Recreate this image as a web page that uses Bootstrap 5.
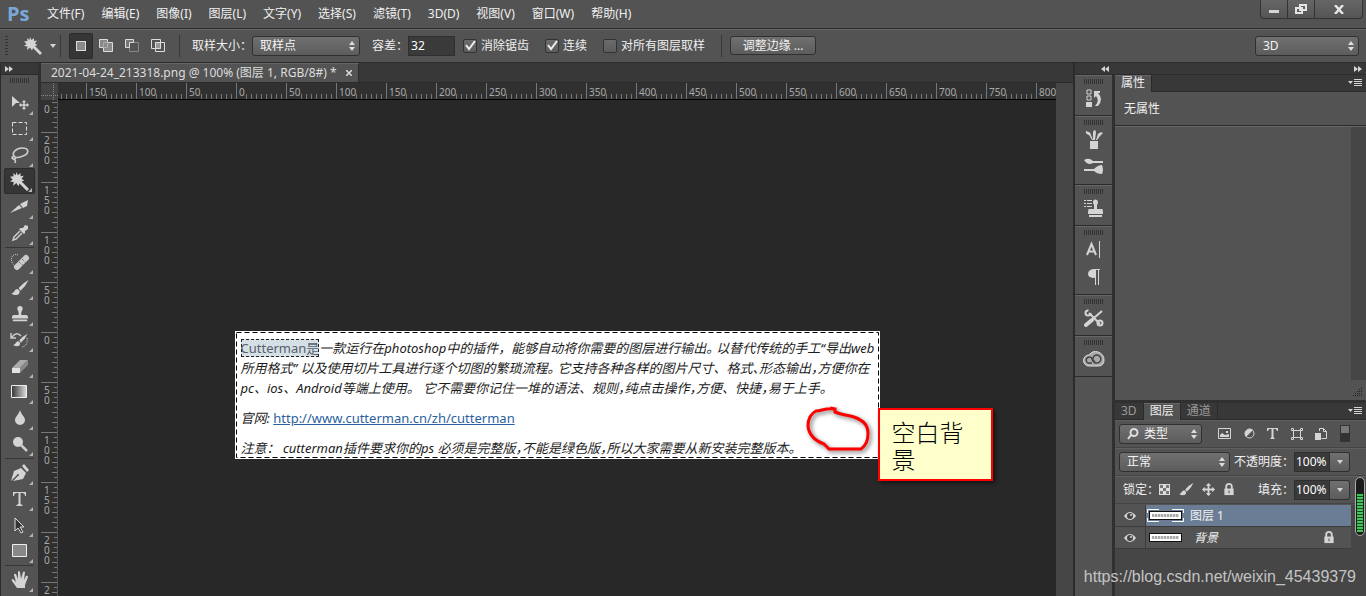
<!DOCTYPE html>
<html lang="zh-CN">
<head>
<meta charset="utf-8">
<meta name="viewport" content="width=device-width, initial-scale=1">
<title>Photoshop</title>
<link href="https://cdn.jsdelivr.net/npm/bootstrap@5.3.0/dist/css/bootstrap.min.css" rel="stylesheet">
<style>
:root{--face:#535353;--dark:#282828;--line:#2b2b2b;--lite:#666}
body{font-family:"Noto Sans","Noto Sans CJK SC",sans-serif;font-size:12px;line-height:16px;color:#f0f0f0;background:var(--face)}
button{font:inherit;color:inherit;background:none;border:0;padding:0}
svg{display:block;flex:none}
.ico{fill:#d4d4d4;stroke:none}
.menubar{height:28px;padding-left:7px}
.logo{font:bold 20px/24px "Open Sans",sans-serif;color:#7ba7d7;width:40px}
.menus{gap:17px}
.menus a{color:#f0f0f0;text-decoration:none}
.winbtns{border:1px solid #333;border-top:0;border-radius:0 0 4px 4px;margin-right:3px;height:19px;background:linear-gradient(#666,#555);overflow:hidden}
.winbtns button{width:27px;height:18px;border-right:1px solid #333;display:flex;align-items:center;justify-content:center}
.winbtns button:last-child{width:47px;border:0}
.optbar{height:34px;border-top:1px solid var(--line);box-shadow:inset 0 1px var(--lite);padding:0 7px 0 5px}
.grip-v{width:3px;height:20px;background:repeating-linear-gradient(#333 0 1px,transparent 1px 3px)}
.grip-h{width:20px;height:5px;flex:none;background:repeating-linear-gradient(90deg,#333 0 1px,transparent 1px 2px)}
.sep{width:1px;height:22px;background:#383838}
.modebtn{width:26px;height:26px;display:flex;align-items:center;justify-content:center}
.modebtn.on{background:#363636;border:1px solid #2b2b2b;border-radius:2px;width:24px}
.picker{appearance:none;height:20px;font:inherit;color:#f4f4f4;border:1px solid #303030;border-radius:3px;padding:0 7px;
 background:url("data:image/svg+xml,%3Csvg xmlns='http://www.w3.org/2000/svg' width='6' height='10'%3E%3Cpath fill='%23ddd' d='M3 0L6 4H0zM3 10L0 6H6z'/%3E%3C/svg%3E") no-repeat right 4px center,linear-gradient(#707070,#5c5c5c)}
.numbox{background:#3a3a3a;border:1px solid #2f2f2f;color:#fff;font:inherit;height:20px;padding:0 2px;border-radius:0}
.pct{padding:0 1px;width:36px}
.tick{appearance:none;width:14px;height:14px;margin:0;border:1px solid #333;border-radius:2px;background:linear-gradient(#6c6c6c,#5c5c5c)}
.tick:checked{background:url("data:image/svg+xml,%3Csvg xmlns='http://www.w3.org/2000/svg' width='12' height='12'%3E%3Cpath fill='none' stroke='%23eee' stroke-width='2' d='M2 5L5 9L11 1'/%3E%3C/svg%3E"),linear-gradient(#6c6c6c,#5c5c5c)}
.btn-edge{height:19px;width:86px;border:1px solid #303030;border-radius:3px;background:linear-gradient(#707070,#5c5c5c);line-height:16px}
.frame{border-top:1px solid var(--line)}
.strip{height:12px;background:#383838;border-bottom:1px solid var(--line)}
.tools{width:41px;border-left:1px solid var(--line);border-right:3px solid #303030}
.tools .grip-h{margin:3px 0 7px}
.toolbtn{height:26px;width:31px;position:relative;display:flex;align-items:center;justify-content:center;flex:none}
.toolbtn::after{content:"";position:absolute;right:2px;bottom:1px;border:2px solid transparent;border-right-color:#b5b5b5;border-bottom-color:#b5b5b5}
.toolbtn.on{background:#363636;border:1px solid #2b2b2b;border-radius:2px}
.rule{height:1px;width:29px;background:#363636;margin:1px 0;flex:none}
.tabs{height:20px;background:#383838;border-bottom:1px solid var(--line)}
.doctab{background:var(--face);border-right:1px solid var(--line);border-top:1px solid var(--lite);padding:0 6px 0 10px;gap:9px;height:19px;line-height:18px;color:#ddd}
.corner{width:17px;height:17px;background:#444}
.rul{background-color:#303030;color:#a9a9a9;font-size:10px;line-height:10px;overflow:hidden}
.rul-h{height:17px;border-bottom:1px solid #000;padding-left:28px;
 background-image:repeating-linear-gradient(90deg,#777 0 1px,transparent 1px 50px),repeating-linear-gradient(90deg,#777 0 1px,transparent 1px 5px);
 background-repeat:no-repeat;background-size:2000px 16px,2000px 5px;background-position:-22px 0,-2px 11px}
.rul-h span{width:50px;flex:none;padding:4px 0 0 3px}
.rul-h b{font-weight:400;background:#303030;display:inline-block;height:12px}
.rul-v{width:17px;border-right:1px solid #555;
 background-image:repeating-linear-gradient(#777 0 1px,transparent 1px 50px),repeating-linear-gradient(#777 0 1px,transparent 1px 10px),repeating-linear-gradient(#777 0 1px,transparent 1px 5px);
 background-repeat:no-repeat;background-size:16px 2000px,5px 2000px,3px 2000px;background-position:0 -18px,11px -8px,13px -3px}
.rul-v span{height:50px;width:14px;padding:3px 4px 0 3px;word-break:break-all;flex:none}
.rul-v span:first-child{height:32px;padding-top:0;padding-bottom:18px;display:flex;align-items:flex-end}
.rul-v span:last-child{height:12px}
.canvas{background:var(--dark);overflow:hidden;padding-top:231px}
.vscroll{width:17px;background:#454545}
.art{width:645px;height:128px;background:#fff;padding:7px 6px;color:#1c1c1c;font-size:13px;line-height:20px;white-space:nowrap}
.art p{margin:0 0 10px;font-style:italic}
.art i{font-feature-settings:"halt"}
.ants{inset:0 1px 1px;pointer-events:none}
.picked{font-style:normal;background:#d5dfe6;color:#56616a;outline:1px dashed #222;outline-offset:-1px}
.art a{color:#2b5f9e;font-style:normal}
.lasso{left:569px;top:73px;filter:drop-shadow(2px 2px 2px #0008)}
.note{left:643px;top:77px;width:115px;height:73px;background:#ffc;border:2px solid #f00;color:#000;padding:8px 12px;font:24px/27px "Noto Sans CJK SC",sans-serif;font-weight:300;white-space:normal;box-shadow:2px 2px 4px #0008}
.side{width:293px;border-left:2px solid var(--line)}
.side>.strip{padding:0 4px 0 26px}
.dock{width:40px;border-right:3px solid #303030}
.grp{border-bottom:1px solid var(--line);box-shadow:inset 0 1px var(--lite);padding-top:4px;display:flex;flex-direction:column;align-items:center}
.grp button{height:28px;display:flex;align-items:center}
.g1{height:41px}.g2{height:69px}
.ptabs{height:17px;background:#383838;border-bottom:1px solid var(--line);color:#999;padding-right:4px}
.ptabs button{padding:0 6px;height:17px;border-right:1px solid var(--line)}
.ptabs .on{background:var(--face);color:#eee;box-shadow:inset 0 1px var(--lite)}
.props{height:328px;border-bottom:3px solid #303030}
.propmsg{height:34px;border-bottom:1px solid var(--line);padding-left:9px}
.propbody{border-top:1px solid var(--lite)}
.track{width:15px;height:253px;background:#454545}
.prow{height:28px;padding-left:4px;border-bottom:1px solid #444;box-shadow:inset 0 1px #606060}
.drop{width:20px;height:20px;border:1px solid #303030;border-left:0;border-radius:0 3px 3px 0;background:linear-gradient(#707070,#5c5c5c);display:flex;align-items:center;justify-content:center}
.layers{background:#464646}
.layer{height:22px;background:var(--face);border-bottom:1px solid #3c3c3c;margin-right:15px}
.eye{width:31px;height:21px;border-right:1px solid #3c3c3c;display:flex;align-items:center;justify-content:center}
.fill{padding-left:3px}
.layer.on .fill{background:#6b7d95}
.thumb{width:33px;height:9px;border:1px solid #111;background:#fff;display:flex;align-items:center;position:relative}
.thumb::before{content:"";flex:1;height:3px;margin:0 2px;background:repeating-linear-gradient(90deg,#aaa 0 2px,#ddd 2px 3px)}
.thumb svg{position:absolute;left:-3px;top:-3px}
.meter{right:1px;top:477px;width:10px;height:59px;border:1px solid #aaa;border-radius:5px;background:#1c1c1c;padding:16px 1px 3px}
.meter i{display:block;height:100%;background:repeating-linear-gradient(#3fc85a 0 2px,#174d22 2px 3px)}
.wm{right:10px;bottom:8px;font:16px/22px "Liberation Sans",sans-serif;color:#c4c4c4;pointer-events:none}
</style>
</head>
<body class="vh-100 overflow-hidden d-flex flex-column position-relative">
<svg width="0" height="0" class="position-absolute" aria-hidden="true">
<defs>
<linearGradient id="gr"><stop stop-color="#333"/><stop offset="1" stop-color="#ddd"/></linearGradient>
<symbol id="wand" viewBox="0 0 18 18"><path d="M6 0l1.500 3L10 1l0 3 3-.5-2 3 2.500 1.500-2.500 1 7 7-2 2-7-7-1 2.500-2-3L3 13l.5-3.500L0 9l2.500-2L0 4.500 3.500 4 3 1l2.500 2z"/></symbol>
<symbol id="brush" viewBox="0 0 20 20"><path d="M20 1Q14 4 9 10l2 3q6-5 9-12zM8 11c-4 0-3 4-7 5 4 3 10 2 9-3z"/></symbol>
<symbol id="move" viewBox="0 0 14 14"><path d="M7 0l3 3H8v3h3V4l3 3-3 3V8H8v3h2l-3 3-3-3h2V8H3v2L0 7l3-3v2h3V3H4z"/></symbol>
<symbol id="stamp" viewBox="0 0 20 20"><path d="M7 4a3 3 0 0 1 6 0c0 2-2 3-1.500 7H17q2 0 2 4H1q0-4 2-4h5.500C9 7 7 6 7 4zM2 16h16v2H2z"/></symbol>
<symbol id="lock" viewBox="0 0 12 14"><path d="M1 6h10v7H1z"/><path d="M3 7V4a3 3 0 0 1 6 0v3" fill="none" stroke="#d4d4d4" stroke-width="2"/><path d="M5.500 8h1v3h-1z" fill="#444"/></symbol>
<symbol id="eyeb" viewBox="0 0 12 8"><path d="M0 4q6-8 12 0q-6 8-12 0z"/><circle cx="6" cy="4" r="3" fill="#444"/><circle cx="7" cy="3" r="1"/></symbol>
<symbol id="pmenu" viewBox="0 0 14 8"><path d="M0 2h5L2.500 5zM6 0h8v1H6zM6 2h8v1H6zM6 4h8v1H6zM6 6h8v1H6z"/></symbol>
<symbol id="dn" viewBox="0 0 6 4"><path d="M0 0h6L3 4z"/></symbol>
<symbol id="ff" viewBox="0 0 8 6"><path d="M0 0l4 3-4 3zM4 0l4 3-4 3z"/></symbol>
<symbol id="rw" viewBox="0 0 8 6"><path d="M4 0v6L0 3zM8 0v6L4 3z"/></symbol>
</defs>
</svg>

<header class="menubar d-flex align-items-center flex-shrink-0">
<div class="logo">Ps</div>
<nav class="menus d-flex">
<a href="#">文件(F)</a><a href="#">编辑(E)</a><a href="#">图像(I)</a><a href="#">图层(L)</a><a href="#">文字(Y)</a><a href="#">选择(S)</a><a href="#">滤镜(T)</a><a href="#">3D(D)</a><a href="#">视图(V)</a><a href="#">窗口(W)</a><a href="#">帮助(H)</a>
</nav>
<div class="winbtns d-flex ms-auto align-self-start">
<button aria-label="最小化"><svg class="ico" width="10" height="8"><path d="M0 5h10v3H0z"/></svg></button>
<button aria-label="还原"><svg width="12" height="10" fill="none" stroke="#e4e4e4" stroke-width="2"><path d="M5 1h6v5H5zM1 4h6v5H1z"/></svg></button>
<button aria-label="关闭"><svg width="10" height="9" stroke="#e4e4e4" stroke-width="2.500"><path d="M1 0l8 9M9 0L1 9"/></svg></button>
</div>
</header>

<section class="optbar d-flex align-items-center flex-shrink-0">
<div class="grip-v"></div>
<svg class="ico ms-3" width="18" height="18"><use href="#wand"/></svg>
<svg class="ico ms-2" width="6" height="4"><use href="#dn"/></svg>
<div class="sep ms-1 me-2"></div>
<button class="modebtn on" aria-label="新选区"><svg width="10" height="10"><path d="M0 0h10v10H0z" fill="#8a8a8a" stroke="#ddd" stroke-width="2"/></svg></button>
<button class="modebtn" aria-label="添加"><svg width="14" height="14" fill="#8a8a8a" stroke="#ddd"><path d="M.5.5h8v3h5v9h-9v-4h-4z"/><path d="M4.500 3.500h4v5h-4z" stroke="#aaa"/></svg></button>
<button class="modebtn" aria-label="减去"><svg width="14" height="14" fill="none"><path d="M4.500 3.500h9v9h-9z" stroke="#888"/><path d="M.5.5h8v3h-4v5h-4z" stroke="#ddd" fill="#777"/></svg></button>
<button class="modebtn" aria-label="交叉"><svg width="14" height="14" fill="none" stroke="#ddd"><path d="M.5.5h9v9h-9zM4.500 3.500h9v9h-9z"/><path d="M4.500 3.500h5v6h-5z" fill="#999"/></svg></button>
<div class="sep ms-2"></div>
<label class="ms-2 ps-1" for="ss">取样大小：</label>
<select class="picker" id="ss" style="width:108px"><option>取样点</option></select>
<label class="ms-2 ps-1" for="tol">容差：</label>
<input class="numbox" id="tol" value="32" style="width:47px">
<input class="tick ms-2" type="checkbox" id="c1" checked><label class="ms-1" for="c1">消除锯齿</label>
<input class="tick ms-3" type="checkbox" id="c2" checked><label class="ms-1" for="c2">连续</label>
<input class="tick ms-3" type="checkbox" id="c3"><label class="ms-1" for="c3">对所有图层取样</label>
<div class="sep ms-3"></div>
<button class="btn-edge ms-2">调整边缘 ...</button>
<select class="picker ms-auto" aria-label="工作区" style="width:104px"><option>3D</option></select>
</section>

<div class="frame d-flex flex-grow-1" style="min-height:0">
<aside class="tools d-flex flex-column align-items-center flex-shrink-0">
<div class="strip w-100 d-flex align-items-center ps-1 flex-shrink-0"><svg class="ico" width="8" height="6"><use href="#ff"/></svg></div>
<div class="grip-h"></div>
<button class="toolbtn" aria-label="移动"><svg class="ico" width="18" height="16"><path d="M1 1l8 7H5l-4 4z"/><use href="#move" x="8" y="5" width="10" height="10"/></svg></button>
<button class="toolbtn" aria-label="选框"><svg width="16" height="14"><path d="M.5.5h14v12H.5z" fill="none" stroke="#ddd" stroke-dasharray="4 2"/></svg></button>
<button class="toolbtn" aria-label="套索"><svg width="18" height="16" fill="none" stroke="#ccc" stroke-width="1.700"><path d="M4 10C-1 6 6 1 11 1c8 0 7 6 1 8-4 1.500-7 2-8 1M4 10c-3-2-4 2-1 2 2 0 2-2 1-2M3 12q2 1 1 4"/></svg></button>
<button class="toolbtn on" aria-label="魔棒"><svg class="ico" width="19" height="19"><use href="#wand"/></svg></button>
<button class="toolbtn" aria-label="切片"><svg class="ico" width="20" height="14"><path d="M0 13L9 5l3 3zM10 4l8-4-1 6-4 2z"/></svg></button>
<button class="toolbtn" aria-label="吸管"><svg class="ico" width="18" height="17"><path d="M10 3l2 0 2-3 3 1 0 3-3 2 0 2-1 1-5-5z"/><path d="M9 6L3 12l-1 3 3-1 6-6" fill="none" stroke="#ccc" stroke-width="1.500"/></svg></button>
<div class="rule"></div>
<button class="toolbtn" aria-label="修复"><svg width="20" height="18"><path d="M8 2C3 0 0 5 2 9s3 5 5 4" fill="none" stroke="#ccc" stroke-dasharray="1 1"/><path d="M7 14L16 5" stroke="#ccc" stroke-width="6" stroke-linecap="round"/><path d="M9 9l5 4M12 6l4 4" stroke="#555" stroke-dasharray="1 1"/></svg></button>
<button class="toolbtn" aria-label="画笔"><svg class="ico" width="19" height="18"><use href="#brush"/></svg></button>
<button class="toolbtn" aria-label="图章"><svg class="ico" width="18" height="18"><use href="#stamp"/></svg></button>
<button class="toolbtn" aria-label="历史画笔"><svg class="ico" width="20" height="17"><use href="#brush" x="2" y="1" width="16" height="15"/><path d="M2 5q5-6 9-1M1 1v5h5" fill="none" stroke="#ccc" stroke-width="1.500"/><path d="M17 6q1 8-5 9" fill="none" stroke="#ddd" stroke-dasharray="1 1"/></svg></button>
<button class="toolbtn" aria-label="橡皮"><svg width="18" height="15"><path d="M1 9l8-8h8l-8 8z" fill="#aaa"/><path d="M1 9h8v5H1z" fill="#e2e2e2"/><path d="M9 9l8-8v5l-8 8z" fill="#888"/></svg></button>
<button class="toolbtn" aria-label="渐变"><svg width="17" height="14"><path d="M.5.5h15v12H.5z" fill="url(#gr)" stroke="#eee"/></svg></button>
<button class="toolbtn" aria-label="模糊"><svg class="ico" width="12" height="16"><path d="M6 0c1 4 5 7 5 10a5 5 0 0 1-10 0C1 7 5 4 6 0z"/></svg></button>
<button class="toolbtn" aria-label="减淡"><svg class="ico" width="16" height="16"><circle cx="6" cy="6" r="5"/><path d="M9 9l6 6" stroke="#ccc" stroke-width="2.500"/></svg></button>
<div class="rule"></div>
<button class="toolbtn" aria-label="钢笔"><svg class="ico" width="18" height="18"><path d="M0 17L3 7l7-3 5 5-3 6-10 2 5-5a1 1 0 1 0-1-1zM11 2l2-2 5 6-2 2z"/></svg></button>
<button class="toolbtn" aria-label="文字"><svg class="ico" width="13" height="14"><path d="M0 0h13v4h-1q0-3-3-3H7.500v11l2 1v1h-6v-1l2-1V1H4Q1 1 1 4H0z"/></svg></button>
<button class="toolbtn" aria-label="路径选择"><svg width="11" height="17"><path d="M1 1l9 9H6l3 5-2 1-3-5-3 3z" fill="#333" stroke="#ddd"/></svg></button>
<button class="toolbtn" aria-label="矩形"><svg width="16" height="14"><path d="M.5.5h14v12H.5z" fill="#888" stroke="#eee"/></svg></button>
<div class="rule"></div>
<button class="toolbtn" aria-label="抓手"><svg class="ico" width="18" height="18"><path d="M6 17L1 10q-1-2 1-2l3 3L3 4q0-2 2-1l2 5V1q1-2 2 0l1 7 2-7q1-1 2 0l-1 8 2-4q2-1 2 1l-3 8v3z"/></svg></button>
</aside>

<main class="d-flex flex-column flex-grow-1" style="min-width:0">
<div class="tabs d-flex flex-shrink-0"><div class="doctab d-flex"><span>2021-04-24_213318.png @ 100% (图层 1, RGB/8#) *</span><button aria-label="关闭文档"><svg width="6" height="6" stroke="#ddd" stroke-width="1.500"><path d="M0 0l6 6M6 0L0 6"/></svg></button></div></div>
<div class="d-flex flex-grow-1" style="min-height:0">
<div class="d-flex flex-column flex-grow-1" style="min-width:0">
<div class="d-flex flex-shrink-0">
<svg class="corner" width="17" height="17"><path d="M12.500 0v17M0 12.500h17" stroke="#888" stroke-dasharray="1 1"/></svg>
<div class="rul rul-h d-flex flex-grow-1"><span><b>150</b></span><span><b>100</b></span><span><b>50</b></span><span><b>0</b></span><span><b>50</b></span><span><b>100</b></span><span><b>150</b></span><span><b>200</b></span><span><b>250</b></span><span><b>300</b></span><span><b>350</b></span><span><b>400</b></span><span><b>450</b></span><span><b>500</b></span><span><b>550</b></span><span><b>600</b></span><span><b>650</b></span><span><b>700</b></span><span><b>750</b></span><span><b>800</b></span></div>
</div>
<div class="d-flex flex-grow-1" style="min-height:0">
<div class="rul rul-v flex-shrink-0 d-flex flex-column"><span>0</span><span>200</span><span>150</span><span>100</span><span>50</span><span>0</span><span>50</span><span>100</span><span>150</span><span>200</span><span>2</span></div>
<div class="canvas flex-grow-1">
<article class="art position-relative mx-auto">
<svg class="ants position-absolute" width="643" height="127"><rect x=".5" y="1.500" width="642" height="125" fill="none" stroke="#000" stroke-dasharray="5 3"/></svg>
<p><span class="picked">Cutterman是</span>一款运行在photoshop中的插件，能够自动将你需要的图层进行输出<i>。</i> 以替代传统的手工“导出web<br>所用格式” 以及使用切片工具进行逐个切图的繁琐流程<i>。</i> 它支持各种各样的图片尺寸、格式<i>、</i>形态输出<i>，</i>方便你在<br>pc、ios、Android等端上使用。 它不需要你记住一堆的语法、规则<i>，</i>纯点击操作<i>，</i>方便、快捷<i>，</i>易于上手。</p>
<p>官网: <a href="#">http://www.cutterman.cn/zh/cutterman</a></p>
<p>注意： cutterman插件要求你的ps 必须是完整版<i>，</i>不能是绿色版<i>，</i>所以大家需要从新安装完整版本。</p>
<svg class="lasso position-absolute" width="68" height="52"><path d="M30 5C20 4 18 7 12 7 6 10 4 15 4 22c1 10 8 15 16 18l5 5h32q7-5 7-15c0-8-3-13-14-17-10-3-12-2-19-5V5l-5-1" fill="none" stroke="#f00" stroke-width="3"/></svg>
<aside class="note position-absolute">空白背景</aside>
</article>
</div>
</div>
</div>
<div class="vscroll flex-shrink-0"></div>
</div>
</main>

<div class="side d-flex flex-column flex-shrink-0">
<div class="strip d-flex align-items-center flex-shrink-0"><svg class="ico" width="8" height="6"><use href="#rw"/></svg><svg class="ico ms-auto" width="8" height="6"><use href="#ff"/></svg></div>
<div class="d-flex flex-grow-1" style="min-height:0">
<div class="dock flex-shrink-0">
<div class="grp g1"><div class="grip-h"></div><button aria-label="历史记录"><svg class="ico" width="16" height="18"><path d="M1 1h4v4H1zM1 7h4v4H1z" fill="none" stroke="#d4d4d4"/><path d="M0 13h6v5H0zM8 2h6v2l-2 0q6 6 0 13l-3 0q5-5 1-10l-2 2z"/></svg></button></div>
<div class="grp g2"><div class="grip-h"></div><button aria-label="画笔预设"><svg class="ico" width="18" height="20"><path d="M5 12h8v8H5zM7 11L4 6Q0 5 1 2q5 1 5 4l2 5zM8 11L8 3q2-4 3 0l-1 8zM11 11l2-6q3-3 5-1l-3 3-3 4z"/></svg></button><button aria-label="画笔"><svg class="ico" width="20" height="18"><path d="M0 2q5-3 9 1h10v2H9q-5 3-9-3zM0 11h10q4-4 8-4 2 5 0 9-5 0-8-3H0z"/></svg></button></div>
<div class="grp g1"><div class="grip-h"></div><button aria-label="仿制源"><svg class="ico" width="19" height="18"><path d="M0 1h2v1H0zM3 1h5v1H3zM0 4h2v1H0zM3 4h5v1H3zM0 7h2v1H0zM3 7h5v1H3z"/><path d="M9 3a2 2 0 0 1 5 0q0 2-1 3v4h5q1 0 1 5H4q0-5 1-5h5V6Q9 5 9 3zM5 16h13v2H5z"/></svg></button></div>
<div class="grp g2"><div class="grip-h"></div><button aria-label="字符"><svg width="15" height="17" fill="none" stroke="#d4d4d4"><path d="M1 14L5.500 3l4.500 11M3 10.500h6" stroke-width="2"/><path d="M13.500 0v17"/></svg></button><button aria-label="段落"><svg class="ico" width="12" height="16"><path d="M5 0h7v1h-1v15h-1V1H8v15H7V9Q0 9 0 5t5-5z"/></svg></button></div>
<div class="grp g1"><div class="grip-h"></div><button aria-label="工具预设"><svg width="20" height="18" fill="none" stroke="#d4d4d4"><path d="M5 4l11 11M3 15L18 2" stroke-width="2"/><path d="M2 16l6-5" stroke-width="4" stroke-linecap="round"/><circle cx="4" cy="4" r="2.500" stroke-width="2" stroke-dasharray="12 4"/><circle cx="16" cy="14" r="2.500" stroke-width="2"/></svg></button></div>
<div class="grp g1"><div class="grip-h"></div><button aria-label="云"><svg width="22" height="16"><path d="M6 15a5.500 5.500 0 0 1 0-11q4-5 9-3 6 2 6 8 0 6-6 6z" fill="#aaa" stroke="#ddd"/><path d="M12 11L9 8a3 3 0 1 0-2 4h2M10 9a4 4 0 1 1 4 3h-2L9 9" fill="none" stroke="#444" stroke-width="1.500"/></svg></button></div>
</div>
<div class="flex-grow-1 d-flex flex-column">
<section class="props d-flex flex-column flex-shrink-0">
<div class="ptabs d-flex align-items-center flex-shrink-0"><button class="on">属性</button><svg class="ico ms-auto" width="14" height="8"><use href="#pmenu"/></svg></div>
<div class="propmsg d-flex align-items-center flex-shrink-0">无属性</div>
<div class="propbody d-flex flex-grow-1 justify-content-end"><div class="d-flex flex-column align-items-end justify-content-between"><div class="track"></div><svg class="m-1" width="9" height="9" stroke="#222" stroke-dasharray="1 1"><path d="M8 .500h1M6 2.500h3M4 4.500h5M2 6.500h7M0 8.500h9"/></svg></div></div>
</section>
<section class="layers flex-grow-1">
<div class="ptabs d-flex align-items-center"><button>3D</button><button class="on">图层</button><button>通道</button><svg class="ico ms-auto" width="14" height="8"><use href="#pmenu"/></svg></div>
<div style="background:var(--face)">
<div class="prow d-flex align-items-center">
<div class="position-relative"><select class="picker ps-4" aria-label="筛选" style="width:83px"><option>类型</option></select><svg class="position-absolute top-0 start-0 ms-2 mt-1" width="12" height="12" fill="none" stroke="#ddd" stroke-width="2"><circle cx="7" cy="4.500" r="3.500"/><path d="M4 7L1 11"/></svg></div>
<div class="d-flex align-items-center flex-grow-1 justify-content-between px-3">
<svg class="ico" width="13" height="11"><path d="M.500.500h12v10H.500z" fill="none" stroke="#d4d4d4"/><path d="M2 9V7l2-2 3 2 4-1v3zM8 3h2v2H8z"/></svg>
<svg class="ico" width="11" height="11"><circle cx="5.500" cy="5.500" r="4.500" fill="none" stroke="#d4d4d4"/><path d="M9 2L2 9A5 5 0 0 1 9 2z"/></svg>
<svg class="ico" width="11" height="11"><path d="M0 0h11v3h-1L9 1H6.500v8l1 1v1h-4v-1l1-1V1H2L1 3H0z"/></svg>
<svg width="12" height="12" fill="none" stroke="#d4d4d4"><path d="M2.500 2.500h7v7h-7zM.500.500h2v2h-2zM9.500.500h2v2h-2zM.500 9.500h2v2h-2zM9.500 9.500h2v2h-2z"/></svg>
<svg class="ico" width="12" height="12"><path d="M4.500 3V.500h4l3 3v7h-5M8.500.500v3h3" fill="none" stroke="#d4d4d4"/><path d="M0 5h6v7H0z"/></svg>
<svg width="10" height="17"><path d="M0 0h10v17H0z" fill="#333"/><path d="M1 1h8v7H1z" fill="#777"/></svg>
</div></div>
<div class="prow d-flex align-items-center">
<select class="picker" aria-label="混合模式" style="width:111px"><option>正常</option></select>
<label class="ms-auto" for="op">不透明度：</label><input class="numbox pct" id="op" value="100%"><button class="drop me-3" aria-label="不透明度滑块"><svg class="ico" width="6" height="4"><use href="#dn"/></svg></button>
</div>
<div class="prow d-flex align-items-center">
<span class="ps-1">锁定：</span>
<svg width="11" height="11"><path d="M0 0h11v11H0z" fill="#ddd"/><path d="M1 1h3v3H1zM7 1h3v3H7zM4 4h3v3H4zM1 7h3v3H1zM7 7h3v3H7z" fill="#777"/></svg>
<svg class="ico ms-2" width="16" height="15"><use href="#brush"/></svg>
<svg class="ico ms-2" width="13" height="13"><use href="#move"/></svg>
<svg class="ico ms-2" width="12" height="13"><use href="#lock"/></svg>
<label class="ms-auto" for="fi">填充：</label><input class="numbox pct" id="fi" value="100%"><button class="drop me-3" aria-label="填充滑块"><svg class="ico" width="6" height="4"><use href="#dn"/></svg></button>
</div>
<div style="height:1px"></div>
</div>
<div class="layer on d-flex"><button class="eye" aria-label="可见"><svg class="ico" width="12" height="8"><use href="#eyeb"/></svg></button><div class="fill flex-grow-1 d-flex align-items-center"><div class="thumb"><svg width="37" height="13" fill="none" stroke="#fff"><path d="M.5 4V.5H12M25 .5h11.500V4M.5 9v3.500H12M25 12.500h11.500V9"/></svg></div><span class="ms-2">图层 1</span></div></div>
<div class="layer d-flex"><button class="eye" aria-label="可见"><svg class="ico" width="12" height="8"><use href="#eyeb"/></svg></button><div class="fill flex-grow-1 d-flex align-items-center"><div class="thumb"></div><em class="ms-2 ps-1">背景</em><svg class="ico ms-auto me-3" width="12" height="13"><use href="#lock"/></svg></div></div>
</section>
</div>
</div>
</div>
</div>
<div class="meter position-absolute"><i></i></div>
<div class="wm position-absolute">https://blog.csdn.net/weixin_45439379</div>
<script src="https://cdn.jsdelivr.net/npm/bootstrap@5.3.0/dist/js/bootstrap.bundle.min.js"></script>
</body>
</html>
